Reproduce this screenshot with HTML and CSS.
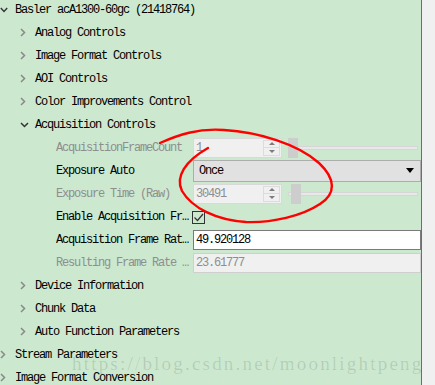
FILE: index.html
```html
<!DOCTYPE html>
<html lang="en">
<head>
    <meta charset="UTF-8">
    <title>Camera features</title>
    <link rel="stylesheet" href="styles.css">
</head>
<body>
<div class="panel">
    <ul class="tree">
        <li class="row"><span class="arrow"><svg width="8" height="6"><path d="M0.8 1l3.2 3.5L7.2 1" stroke="#333" stroke-width="1.4" fill="none"/></svg></span>Basler acA1300-60gc (21418764)</li>
        <li class="row lv1"><span class="arrow"><svg width="6" height="9"><path d="M1 1l3.5 3.5L1 8" stroke="#8a8a8a" stroke-width="1.5" fill="none"/></svg></span>Analog Controls</li>
        <li class="row lv1"><span class="arrow"><svg width="6" height="9"><path d="M1 1l3.5 3.5L1 8" stroke="#8a8a8a" stroke-width="1.5" fill="none"/></svg></span>Image Format Controls</li>
        <li class="row lv1"><span class="arrow"><svg width="6" height="9"><path d="M1 1l3.5 3.5L1 8" stroke="#8a8a8a" stroke-width="1.5" fill="none"/></svg></span>AOI Controls</li>
        <li class="row lv1"><span class="arrow"><svg width="6" height="9"><path d="M1 1l3.5 3.5L1 8" stroke="#8a8a8a" stroke-width="1.5" fill="none"/></svg></span>Color Improvements Control</li>
        <li class="row lv1"><span class="arrow"><svg width="9" height="6"><path d="M1 1l3.5 3.5L8 1" stroke="#333" stroke-width="1.5" fill="none"/></svg></span>Acquisition Controls</li>

        <li class="row prop">
            <span class="label off">AcquisitionFrameCount</span>
            <span class="value">
                <span class="spin"><span class="num">1</span><span class="btns"><i class="up"></i><i class="down"></i></span></span>
                <span class="slider"><span class="track"></span><span class="handle" style="left:0px"></span></span>
            </span>
        </li>
        <li class="row prop">
            <span class="label">Exposure Auto</span>
            <span class="value">
                <span class="combo">Once<i class="drop"></i></span>
            </span>
        </li>
        <li class="row prop">
            <span class="label off">Exposure Time (Raw)</span>
            <span class="value">
                <span class="spin"><span class="num">30491</span><span class="btns"><i class="up"></i><i class="down"></i></span></span>
                <span class="slider"><span class="track"></span><span class="handle" style="left:3px"></span></span>
            </span>
        </li>
        <li class="row prop">
            <span class="label">Enable Acquisition Frame Rate</span>
            <span class="value">
                <span class="check"><svg width="11" height="11"><path d="M1.5 5.5l3 3L10 2" stroke="#333" stroke-width="1.2" fill="none"/></svg></span>
            </span>
        </li>
        <li class="row prop">
            <span class="label">Acquisition Frame Rate (Abs)</span>
            <span class="value"><span class="edit">49.920128</span></span>
        </li>
        <li class="row prop">
            <span class="label off">Resulting Frame Rate (Abs)</span>
            <span class="value"><span class="edit off">23.61777</span></span>
        </li>

        <li class="row lv1"><span class="arrow"><svg width="6" height="9"><path d="M1 1l3.5 3.5L1 8" stroke="#8a8a8a" stroke-width="1.5" fill="none"/></svg></span>Device Information</li>
        <li class="row lv1"><span class="arrow"><svg width="6" height="9"><path d="M1 1l3.5 3.5L1 8" stroke="#8a8a8a" stroke-width="1.5" fill="none"/></svg></span>Chunk Data</li>
        <li class="row lv1"><span class="arrow"><svg width="6" height="9"><path d="M1 1l3.5 3.5L1 8" stroke="#8a8a8a" stroke-width="1.5" fill="none"/></svg></span>Auto Function Parameters</li>
        <li class="row"><span class="arrow"><svg width="6" height="9"><path d="M1 1l3.5 3.5L1 8" stroke="#8a8a8a" stroke-width="1.5" fill="none"/></svg></span>Stream Parameters</li>
        <li class="row"><span class="arrow"><svg width="6" height="9"><path d="M1 1l3.5 3.5L1 8" stroke="#8a8a8a" stroke-width="1.5" fill="none"/></svg></span>Image Format Conversion</li>
    </ul>
</div>

<!-- red pen mark drawn over the screenshot -->
<svg class="mark" width="435" height="385">
    <path d="M160 143C178 135 198 128 224 130C258 132 298 144 319 163C336 179 336 194 320 204C302 216 272 223 246 222C216 220 192 208 182 191C175 177 185 161 208 148" stroke="#f00" stroke-width="2.4" fill="none" stroke-linecap="round"/>
</svg>
<div class="watermark">https://blog.csdn.net/moonlightpeng</div>
</body>
</html>
```
FILE: styles.css
```css
html,body{
    margin: 0;
    height: 100%;
    overflow: hidden;
}
body{
    position: relative;
    background: #f0f0f0;
    font-family: "Liberation Mono", monospace;
    font-size: 12px;
    letter-spacing: -1.2px;
    color: #000;
}
.panel{
    width: 421px;
    height: 385px;
    background: #cce8cf;
    border-right: 1px solid #6e6e6e;
    overflow: hidden;
}
.tree{
    margin: -2px 0 0;
    padding: 0;
    list-style: none;
}
.row{
    height: 23px;
    display: flex;
    align-items: center;
    white-space: nowrap;
}
.lv1{
    padding-left: 20px;
}
.arrow{
    width: 15px;
    flex: none;
    display: flex;
    align-items: center;
}
.arrow svg{
    display: block;
}
.prop{
    padding-left: 56px;
}
.label{
    width: 137px;
    flex: none;
    overflow: hidden;
    text-overflow: ellipsis;
}
.off{
    color: #8e8e8e;
}
.value{
    width: 228px;
    flex: none;
    display: flex;
    align-items: center;
}

/* spin box */
.spin{
    width: 89px;
    height: 20px;
    box-sizing: border-box;
    border: 1px solid #d9d9d9;
    background: #f0f0f0;
    display: flex;
    flex: none;
}
.spin .num{
    flex: 1;
    padding-left: 2px;
    line-height: 18px;
    color: #8e8e8e;
}
.spin .btns{
    width: 15px;
    margin: 1px 1px 1px 0;
    border: 1px solid #dcdcdc;
    display: flex;
    flex-direction: column;
}
.btns i{
    flex: 1;
    display: flex;
    align-items: center;
    justify-content: center;
}
.btns i.up{
    border-bottom: 1px solid #dcdcdc;
}
.btns i:after{
    content: "";
    border-left: 3px solid transparent;
    border-right: 3px solid transparent;
}
.btns i.up:after{
    border-bottom: 3px solid #7c7c7c;
}
.btns i.down:after{
    border-top: 3px solid #7c7c7c;
}

/* slider */
.slider{
    flex: 1;
    height: 20px;
    margin: 0 3px 0 6px;
    position: relative;
    display: flex;
    align-items: center;
}
.track{
    flex: 1;
    height: 2px;
    background: #e8e8e8;
    border: 1px solid #d6d6d6;
}
.handle{
    position: absolute;
    top: 0;
    width: 10px;
    height: 20px;
    background: #cdcdcd;
}

/* combo box */
.combo{
    width: 228px;
    height: 22px;
    box-sizing: border-box;
    border: 1px solid #adadad;
    background: #e1e1e1;
    display: flex;
    align-items: center;
    justify-content: space-between;
    padding: 0 6px 0 5px;
}
.drop{
    border-top: 5px solid #000;
    border-left: 4px solid transparent;
    border-right: 4px solid transparent;
}

/* check box */
.check{
    width: 13px;
    height: 13px;
    box-sizing: border-box;
    border: 1px solid #333;
    margin-left: -1px;
    margin-top: 2px;
    display: flex;
    align-items: center;
    justify-content: center;
}
.check svg{
    display: block;
}

/* text edit */
.edit{
    width: 228px;
    height: 20px;
    box-sizing: border-box;
    border: 1px solid #7a7a7a;
    background: #fff;
    padding-left: 2px;
    line-height: 18px;
}
.edit.off{
    border-color: #cfcfcf;
    background: #f0f0f0;
}

.mark{
    position: absolute;
    left: 0;
    top: 0;
}
.watermark{
    position: absolute;
    left: 72px;
    top: 354px;
    font-family: "Liberation Serif", serif;
    font-size: 19px;
    line-height: 19px;
    letter-spacing: 2.2px;
    color: rgba(0,0,0,0.12);
    white-space: nowrap;
}
```
